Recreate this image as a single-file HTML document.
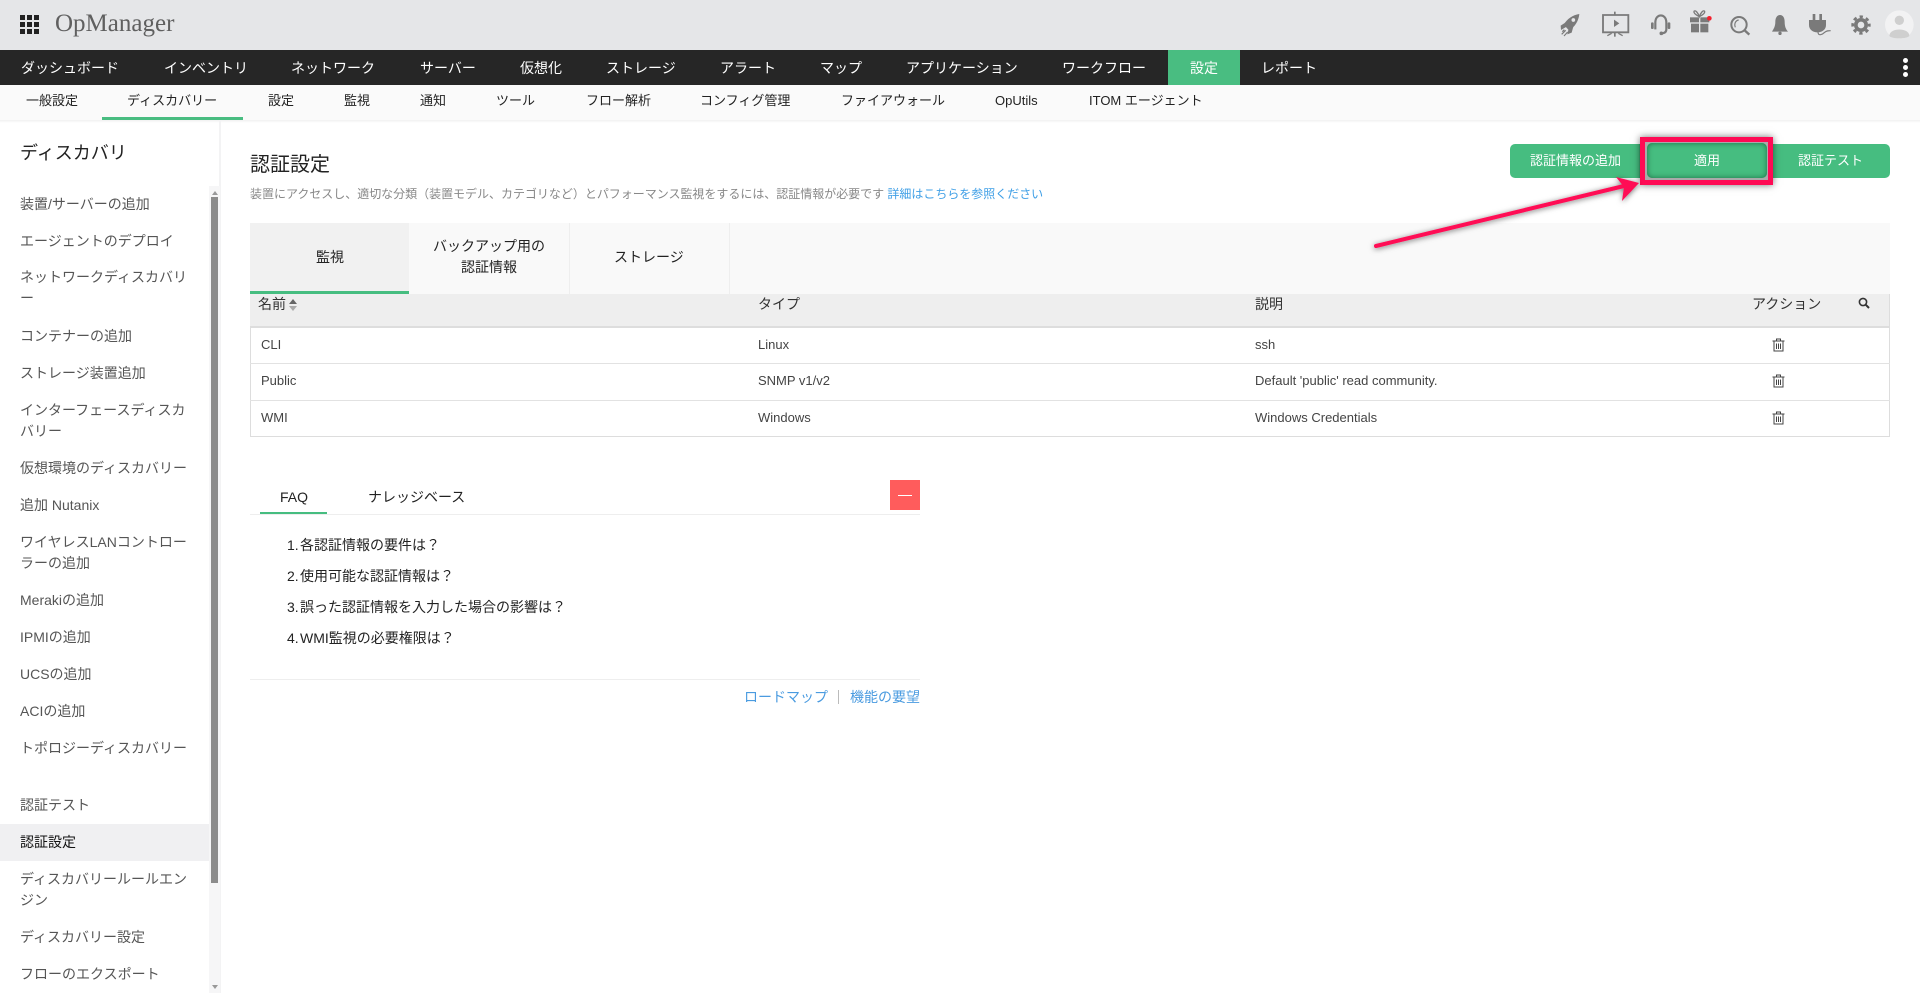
<!DOCTYPE html>
<html lang="ja">
<head>
<meta charset="utf-8">
<title>OpManager</title>
<style>
html,body{margin:0;padding:0;width:1920px;height:993px;overflow:hidden;background:#fff}
body{position:relative;font-family:"Liberation Sans","Noto Sans CJK JP",sans-serif;font-size:14px;color:#333}
.a{position:absolute}
.t{position:absolute;white-space:nowrap;line-height:20px;height:20px}
.n{color:#fff;font-size:14px}
.s{color:#222;font-size:13px}
.m{color:#555;font-size:14px}
.r{color:#444;font-size:13px}
.q{color:#222;font-size:14px}
.l{color:#4a9be0;font-size:14px}
</style>
</head>
<body>
<!-- header -->
<div class="a" style="left:0;top:0;width:1920px;height:50px;background:#e5e6e8"></div>
<svg class="a" style="left:20px;top:15px" width="19" height="19" viewBox="0 0 19 19" fill="#222"><rect x="0" y="0" width="5" height="5"/><rect x="7" y="0" width="5" height="5"/><rect x="14" y="0" width="5" height="5"/><rect x="0" y="7" width="5" height="5"/><rect x="7" y="7" width="5" height="5"/><rect x="14" y="7" width="5" height="5"/><rect x="0" y="14" width="5" height="5"/><rect x="7" y="14" width="5" height="5"/><rect x="14" y="14" width="5" height="5"/></svg>
<div class="t" style="left:55px;top:14px;font-family:'Liberation Serif',serif;font-size:25px;color:#606060;line-height:20px">OpManager</div>

<svg class="a" style="left:1520px;top:0" width="400" height="100" viewBox="0 0 1200 300">
<g fill="#7a7a7a" stroke="none">
<!-- rocket -->
<path d="M178 42C158 45 142 56 131 74L147 91C165 81 176 62 178 42Z"/>
<path d="M136 68L122 77L123 90L140 80Z"/>
<path d="M146 86L142 103L155 98L160 80Z"/>
<circle cx="160" cy="60" r="5.5" fill="#e5e6e8"/>
<path d="M125 103L137 91M132 108L143 96M127 95L133 89" stroke="#7a7a7a" stroke-width="3.5" fill="none"/>
<!-- presentation -->
<path d="M249 45H325V97H249Z" fill="none" stroke="#7a7a7a" stroke-width="5.5"/>
<rect x="282" y="35" width="5" height="10"/><rect x="282" y="97" width="5" height="13"/>
<path d="M282 59V81L298 70Z"/>
<path d="M262 107L275 100M308 107L295 100" stroke="#7a7a7a" stroke-width="4" fill="none"/>
<!-- headset -->
<path d="M406 88V68C406 39 439 39 439 68V88C439 97 432 100 422 100" fill="none" stroke="#7a7a7a" stroke-width="6.5"/>
<rect x="393" y="67" width="8" height="20" rx="3"/><rect x="443" y="67" width="8" height="20" rx="3"/>
<circle cx="424" cy="100" r="5.5"/>
<!-- gift -->
<rect x="510" y="52" width="27" height="15"/><rect x="541" y="52" width="27" height="15"/>
<rect x="513" y="71" width="24" height="26"/><rect x="541" y="71" width="24" height="26"/>
<path d="M538 50C530 46 520 40 522 34C526 29 534 38 538 50C542 38 550 29 554 34C556 40 546 46 538 50Z" fill="none" stroke="#7a7a7a" stroke-width="4"/>
<circle cx="568" cy="55" r="7" fill="#f4202e"/>
<!-- search -->
<circle cx="657" cy="74" r="23" fill="none" stroke="#7a7a7a" stroke-width="6"/>
<path d="M674 91L688 104" stroke="#7a7a7a" stroke-width="7" fill="none"/>
<path d="M656 60C646 62 642 72 646 82" stroke="#7a7a7a" stroke-width="3.5" fill="none"/>
<!-- bell -->
<path d="M780 45C770 45 766 55 766 66C766 80 760 88 756 95H804C798 88 794 80 794 66C794 55 790 45 780 45Z"/>
<circle cx="780" cy="100" r="5"/>
<!-- plug -->
<rect x="878" y="42" width="8" height="19"/><rect x="898" y="42" width="8" height="19"/>
<path d="M867 60H918V75C918 90 905 97 892 97C880 97 867 90 867 75Z"/>
<path d="M894 96C894 110 908 103 914 97C920 92 925 92 932 92" fill="none" stroke="#7a7a7a" stroke-width="3.5"/>
<!-- gear -->
<circle cx="1023" cy="75" r="15.5" fill="none" stroke="#7a7a7a" stroke-width="11"/>
<circle cx="1023" cy="75" r="25" fill="none" stroke="#7a7a7a" stroke-width="8" stroke-dasharray="10 9.63" stroke-dashoffset="5"/>
<!-- avatar -->
<circle cx="1138" cy="74" r="43" fill="#f2f2f3"/>
<circle cx="1138" cy="61" r="14" fill="#cfcfcf"/>
<path d="M1108 108C1108 82 1168 82 1168 108C1155 118 1120 118 1108 108Z" fill="#cfcfcf"/>
</g>
</svg>

<!-- main nav -->
<div class="a" style="left:0;top:50px;width:1920px;height:35px;background:#262626"></div>
<div class="a" style="left:1168px;top:50px;width:72px;height:35px;background:#49bd81"></div>
<div class="t n" style="left:21px;top:58px">ダッシュボード</div>
<div class="t n" style="left:164px;top:58px">インベントリ</div>
<div class="t n" style="left:291px;top:58px">ネットワーク</div>
<div class="t n" style="left:420px;top:58px">サーバー</div>
<div class="t n" style="left:520px;top:58px">仮想化</div>
<div class="t n" style="left:606px;top:58px">ストレージ</div>
<div class="t n" style="left:720px;top:58px">アラート</div>
<div class="t n" style="left:820px;top:58px">マップ</div>
<div class="t n" style="left:906px;top:58px">アプリケーション</div>
<div class="t n" style="left:1062px;top:58px">ワークフロー</div>
<div class="t n" style="left:1190px;top:58px">設定</div>
<div class="t n" style="left:1261px;top:58px">レポート</div>
<div class="a" style="left:1903px;top:58px;width:5px;height:5px;border-radius:50%;background:#fff"></div>
<div class="a" style="left:1903px;top:65px;width:5px;height:5px;border-radius:50%;background:#fff"></div>
<div class="a" style="left:1903px;top:72px;width:5px;height:5px;border-radius:50%;background:#fff"></div>

<!-- sub nav -->
<div class="a" style="left:0;top:85px;width:1920px;height:35px;background:#fafafa"></div>
<div class="a" style="left:0;top:120px;width:1920px;height:3px;background:linear-gradient(#f0f0f0,#fff)"></div>
<div class="a" style="left:102px;top:117px;width:141px;height:3px;background:#49bd81"></div>
<div class="t s" style="left:26px;top:91px">一般設定</div>
<div class="t s" style="left:127px;top:91px">ディスカバリー</div>
<div class="t s" style="left:268px;top:91px">設定</div>
<div class="t s" style="left:344px;top:91px">監視</div>
<div class="t s" style="left:420px;top:91px">通知</div>
<div class="t s" style="left:496px;top:91px">ツール</div>
<div class="t s" style="left:586px;top:91px">フロー解析</div>
<div class="t s" style="left:700px;top:91px">コンフィグ管理</div>
<div class="t s" style="left:841px;top:91px">ファイアウォール</div>
<div class="t s" style="left:995px;top:91px">OpUtils</div>
<div class="t s" style="left:1089px;top:91px">ITOM エージェント</div>

<!-- sidebar -->
<div class="a" style="left:219px;top:120px;width:2px;height:873px;background:#f3f3f4"></div>
<div class="a" style="left:209px;top:186px;width:11px;height:807px;background:#f6f6f7"></div>
<div class="a" style="left:211px;top:197px;width:7px;height:686px;background:#8c8c8c"></div>
<svg class="a" style="left:211px;top:190px" width="8" height="6"><path d="M1 5L4 1L7 5Z" fill="#999"/></svg>
<svg class="a" style="left:211px;top:984px" width="8" height="6"><path d="M1 1L4 5L7 1Z" fill="#999"/></svg>
<div class="a" style="left:0;top:824px;width:209px;height:37px;background:#f0f0f2"></div>
<div class="t" style="left:20px;top:143px;font-size:18px;color:#222">ディスカバリ</div>
<div class="t m" style="left:20px;top:194px">装置/サーバーの追加</div>
<div class="t m" style="left:20px;top:231px">エージェントのデプロイ</div>
<div class="t m" style="left:20px;top:267px">ネットワークディスカバリ</div>
<div class="t m" style="left:20px;top:288px">ー</div>
<div class="t m" style="left:20px;top:326px">コンテナーの追加</div>
<div class="t m" style="left:20px;top:363px">ストレージ装置追加</div>
<div class="t m" style="left:20px;top:400px">インターフェースディスカ</div>
<div class="t m" style="left:20px;top:421px">バリー</div>
<div class="t m" style="left:20px;top:458px">仮想環境のディスカバリー</div>
<div class="t m" style="left:20px;top:495px">追加 Nutanix</div>
<div class="t m" style="left:20px;top:532px">ワイヤレスLANコントロー</div>
<div class="t m" style="left:20px;top:553px">ラーの追加</div>
<div class="t m" style="left:20px;top:590px">Merakiの追加</div>
<div class="t m" style="left:20px;top:627px">IPMIの追加</div>
<div class="t m" style="left:20px;top:664px">UCSの追加</div>
<div class="t m" style="left:20px;top:701px">ACIの追加</div>
<div class="t m" style="left:20px;top:738px">トポロジーディスカバリー</div>
<div class="t m" style="left:20px;top:795px">認証テスト</div>
<div class="t m" style="left:20px;top:832px;color:#111">認証設定</div>
<div class="t m" style="left:20px;top:869px">ディスカバリールールエン</div>
<div class="t m" style="left:20px;top:890px">ジン</div>
<div class="t m" style="left:20px;top:927px">ディスカバリー設定</div>
<div class="t m" style="left:20px;top:964px">フローのエクスポート</div>

<!-- title -->
<div class="t" style="left:250px;top:155px;font-size:20px;color:#222">認証設定</div>
<div class="t" style="left:250px;top:184px;font-size:12px;color:#888;letter-spacing:-.02px">装置にアクセスし、適切な分類（装置モデル、カテゴリなど）とパフォーマンス監視をするには、認証情報が必要です <span style="color:#3f9fe6">詳細はこちらを参照ください</span></div>

<!-- buttons -->
<div class="a" style="left:1510px;top:144px;width:380px;height:34px;border-radius:5px;background:#46bd80"></div>
<div class="a" style="left:1639px;top:144px;width:1px;height:34px;background:#3fae75"></div>
<div class="t" style="left:1530px;top:151px;font-size:13px;color:#fff">認証情報の追加</div>
<div class="t" style="left:1798px;top:151px;font-size:13px;color:#fff">認証テスト</div>
<div class="a" style="left:1640px;top:137px;width:123px;height:38px;border:5px solid #ff0a54;background:#aaa;box-shadow:0 0 7px rgba(0,0,0,.55)"></div>
<div class="a" style="left:1647px;top:143px;width:120px;height:35px;border-radius:5px;background:#46bd80;box-shadow:inset 0 0 6px rgba(0,60,30,.6)"></div>
<div class="t" style="left:1694px;top:151px;font-size:13px;color:#fff">適用</div>

<!-- tabs -->
<div class="a" style="left:250px;top:223px;width:1640px;height:71px;background:#f9f9f9"></div>
<div class="a" style="left:250px;top:223px;width:159px;height:71px;background:#f1f1f1"></div>
<div class="a" style="left:250px;top:291px;width:159px;height:3px;background:#46bd80"></div>
<div class="a" style="left:569px;top:223px;width:1px;height:71px;background:#eee"></div>
<div class="a" style="left:729px;top:223px;width:1px;height:71px;background:#eee"></div>
<div class="t" style="left:316px;top:247px;font-size:14px;color:#222">監視</div>
<div class="t" style="left:433px;top:236px;font-size:14px;color:#222">バックアップ用の</div>
<div class="t" style="left:461px;top:257px;font-size:14px;color:#222">認証情報</div>
<div class="t" style="left:614px;top:247px;font-size:14px;color:#222">ストレージ</div>

<!-- table -->
<div class="a" style="left:250px;top:294px;width:1640px;height:32px;background:#eee"></div>
<div class="a" style="left:250px;top:326px;width:1640px;height:2px;background:#ddd"></div>
<div class="a" style="left:250px;top:326px;width:1px;height:111px;background:#ddd"></div>
<div class="a" style="left:1889px;top:294px;width:1px;height:143px;background:#ddd"></div>
<div class="a" style="left:250px;top:363px;width:1640px;height:1px;background:#e2e2e2"></div>
<div class="a" style="left:250px;top:400px;width:1640px;height:1px;background:#e2e2e2"></div>
<div class="a" style="left:250px;top:436px;width:1640px;height:1px;background:#ddd"></div>
<div class="t" style="left:258px;top:294px;font-size:14px;color:#333">名前</div>
<svg class="a" style="left:288px;top:298px" width="10" height="14"><path d="M1 6L5 1L9 6Z" fill="#666"/><path d="M1 8L5 13L9 8Z" fill="#aaa"/></svg>
<div class="t" style="left:758px;top:294px;font-size:14px;color:#333">タイプ</div>
<div class="t" style="left:1255px;top:294px;font-size:14px;color:#333">説明</div>
<div class="t" style="left:1752px;top:294px;font-size:14px;color:#333">アクション</div>
<svg class="a" style="left:1858px;top:297px" width="12" height="12" viewBox="0 0 12 12"><circle cx="5" cy="5" r="3.6" fill="none" stroke="#333" stroke-width="1.6"/><path d="M7.7 7.7L11 11" stroke="#333" stroke-width="2"/></svg>

<div class="t r" style="left:261px;top:335px">CLI</div>
<div class="t r" style="left:758px;top:335px">Linux</div>
<div class="t r" style="left:1255px;top:335px">ssh</div>
<div class="t r" style="left:261px;top:371px">Public</div>
<div class="t r" style="left:758px;top:371px">SNMP v1/v2</div>
<div class="t r" style="left:1255px;top:371px">Default 'public' read community.</div>
<div class="t r" style="left:261px;top:408px">WMI</div>
<div class="t r" style="left:758px;top:408px">Windows</div>
<div class="t r" style="left:1255px;top:408px">Windows Credentials</div>

<svg class="a" style="left:1772px;top:338px" width="13" height="14" viewBox="0 0 13 14" fill="none" stroke="#444"><path d="M.5 3H12.5M4.5 3V1H8.5V3M2 3V13H11V3" /><path d="M4.5 5.5V11M6.5 5.5V11M8.5 5.5V11" /></svg>
<svg class="a" style="left:1772px;top:374px" width="13" height="14" viewBox="0 0 13 14" fill="none" stroke="#444"><path d="M.5 3H12.5M4.5 3V1H8.5V3M2 3V13H11V3" /><path d="M4.5 5.5V11M6.5 5.5V11M8.5 5.5V11" /></svg>
<svg class="a" style="left:1772px;top:411px" width="13" height="14" viewBox="0 0 13 14" fill="none" stroke="#444"><path d="M.5 3H12.5M4.5 3V1H8.5V3M2 3V13H11V3" /><path d="M4.5 5.5V11M6.5 5.5V11M8.5 5.5V11" /></svg>

<!-- FAQ -->
<div class="a" style="left:250px;top:514px;width:670px;height:1px;background:#eee"></div>
<div class="a" style="left:260px;top:512px;width:67px;height:2px;background:#46bd80"></div>
<div class="t q" style="left:280px;top:487px">FAQ</div>
<div class="t q" style="left:368px;top:487px">ナレッジベース</div>
<div class="a" style="left:890px;top:480px;width:30px;height:30px;background:#ff5c5c"></div>
<div class="a" style="left:898px;top:495px;width:14px;height:1px;background:#fff"></div>
<div class="t q" style="left:287px;top:535px">1.</div><div class="t q" style="left:300px;top:535px">各認証情報の要件は？</div>
<div class="t q" style="left:287px;top:566px">2.</div><div class="t q" style="left:300px;top:566px">使用可能な認証情報は？</div>
<div class="t q" style="left:287px;top:597px">3.</div><div class="t q" style="left:300px;top:597px">誤った認証情報を入力した場合の影響は？</div>
<div class="t q" style="left:287px;top:628px">4.</div><div class="t q" style="left:300px;top:628px">WMI監視の必要権限は？</div>
<div class="a" style="left:250px;top:679px;width:670px;height:1px;background:#eee"></div>
<div class="t l" style="left:744px;top:687px">ロードマップ</div>
<div class="a" style="left:838px;top:690px;width:1px;height:14px;background:#bbb"></div>
<div class="t l" style="left:850px;top:687px">機能の要望</div>

<!-- arrow -->
<svg class="a" style="left:1360px;top:165px" width="300" height="100" viewBox="1360 165 300 100">
<defs><filter id="f" x="-10%" y="-40%" width="120%" height="180%"><feDropShadow dx="0" dy="1" stdDeviation="3" flood-color="#000" flood-opacity=".55"/></filter></defs>
<g filter="url(#f)">
<path d="M1376 246L1624 186" stroke="#ff0a54" stroke-width="4" stroke-linecap="round" fill="none"/>
<path d="M1616 177L1639 183L1622 201L1624 187Z" fill="#ff0a54"/>
</g>
</svg>
</body>
</html>
